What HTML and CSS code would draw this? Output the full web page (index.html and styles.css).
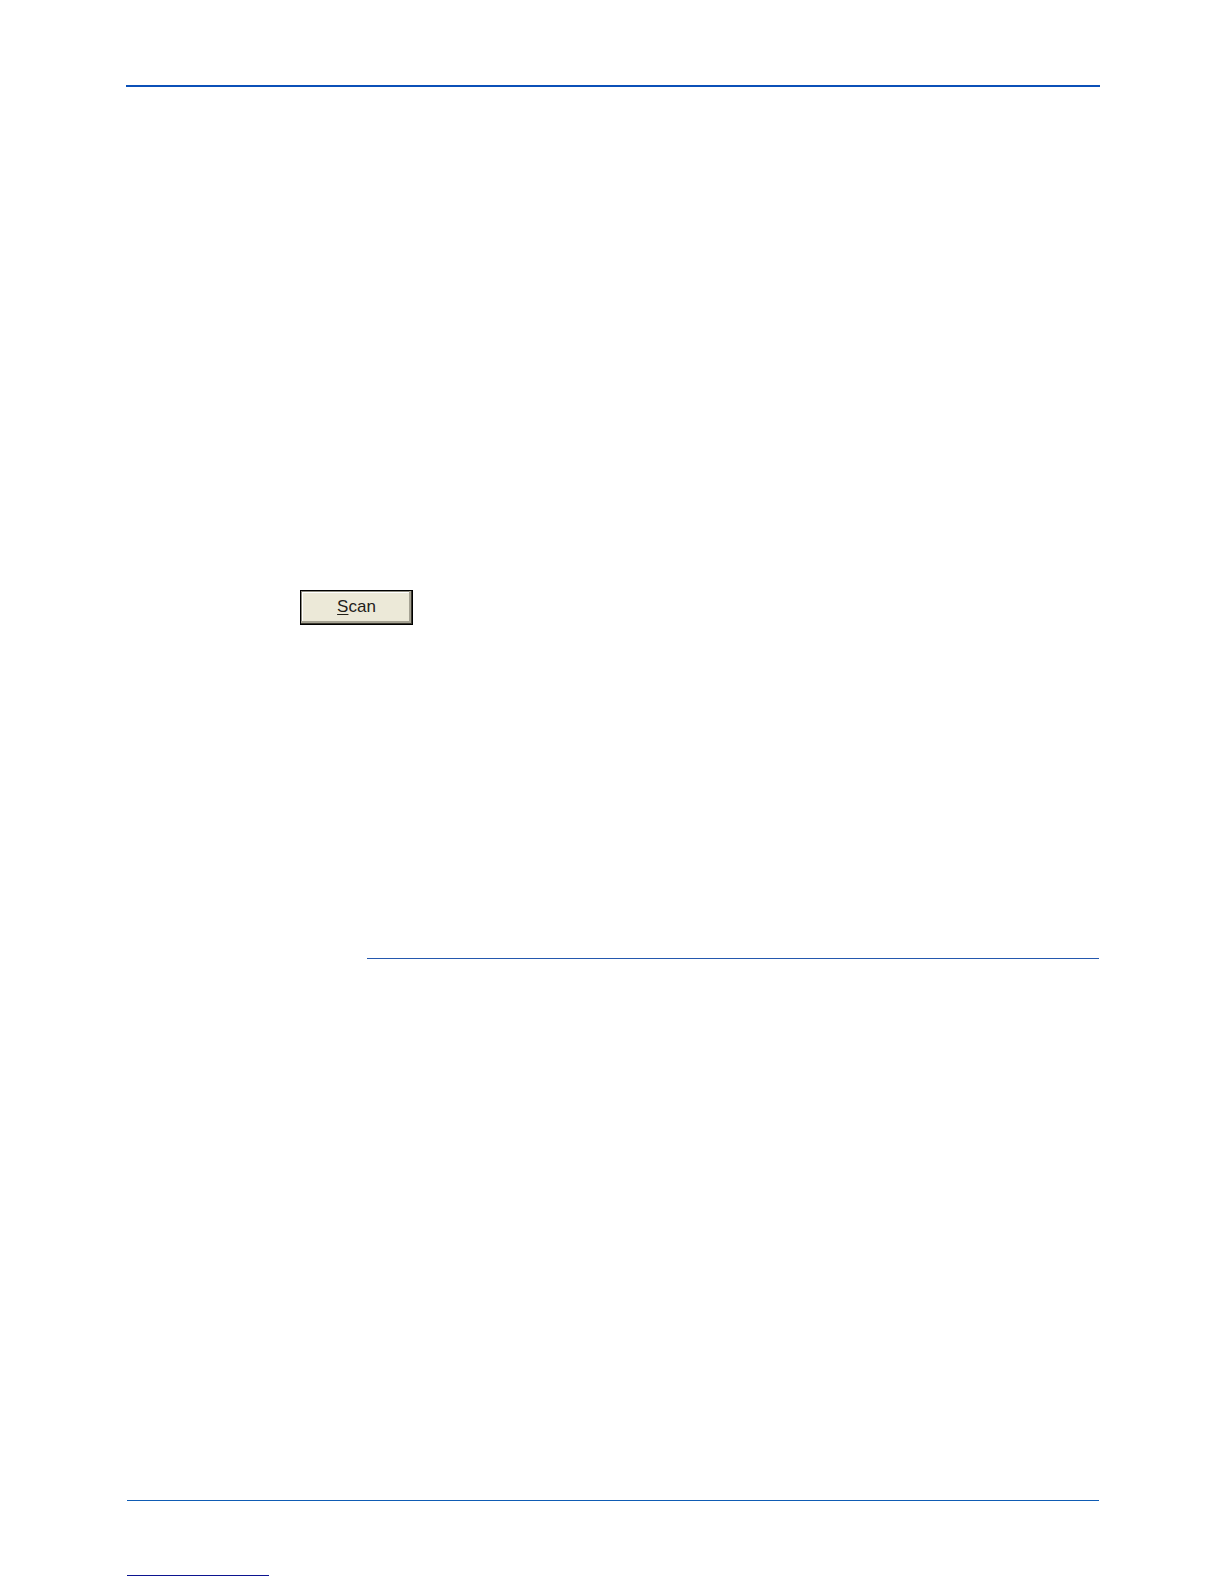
FILE: index.html
```
<!DOCTYPE html>
<html lang="en">
<head>
  <meta charset="UTF-8">
  <meta name="viewport" content="width=device-width, initial-scale=1.0">
  <title>Scan</title>
  <link rel="stylesheet" href="styles.css">
</head>
<body>

  <div class="page">
    <hr class="header-line">

    <!-- Scan step -->
    <main class="content">
      <button type="button" class="scan" accesskey="s"><span class="key">S</span>can</button>
      <hr class="section-line">
    </main>

    <!-- Page footer -->
    <footer class="footer">
      <hr class="footer-line">
      <hr class="link-line">
    </footer>
  </div>

</body>
</html>
```
FILE: styles.css
```
* {
  box-sizing: border-box;
}
body {
  margin: 0;
  background-color: #fff;
  font-family: "Liberation Sans", Arial, sans-serif;
}
.page {
  display: flex;
  flex-direction: column;
  min-height: 100vh;
  padding: 85px 125px 8px 127px;
}
hr {
  margin: 0;
  border: none;
  height: 1px;
  background-color: #0f5cb4;
}
.header-line {
  height: 2px;
  margin: 0 -1px;
  background-color: #0b50b8;
}
.content {
  flex: 1;
  padding: 503px 0 40px;
}
.scan {
  display: block;
  width: 113px;
  height: 35px;
  margin-left: 173px;
  padding: 0 0 1px;
  border: 1px solid #000;
  border-radius: 0;
  background-color: #ece9d8;
  /* beveled edge */
  box-shadow: inset -1px -1px 0 #3c3a30, inset -3px -3px 0 #a5a293, inset 1px 1px 0 #8a887c, inset 2px 2px 0 #fff;
  color: #222018;
  font-family: inherit;
  font-size: 17px;
  line-height: 20px;
  cursor: pointer;
}
.scan:active {
  box-shadow: inset 2px 2px 0 #a5a293;
}
.key {
  text-decoration: underline;
  text-underline-offset: 2px;
}
.section-line {
  margin: 333px 0 0 240px;
  background-color: #2458ae;
}
.footer-line {
  margin-bottom: 74px;
}
.link-line {
  width: 142px;
  background-color: #0c1490;
}
```
